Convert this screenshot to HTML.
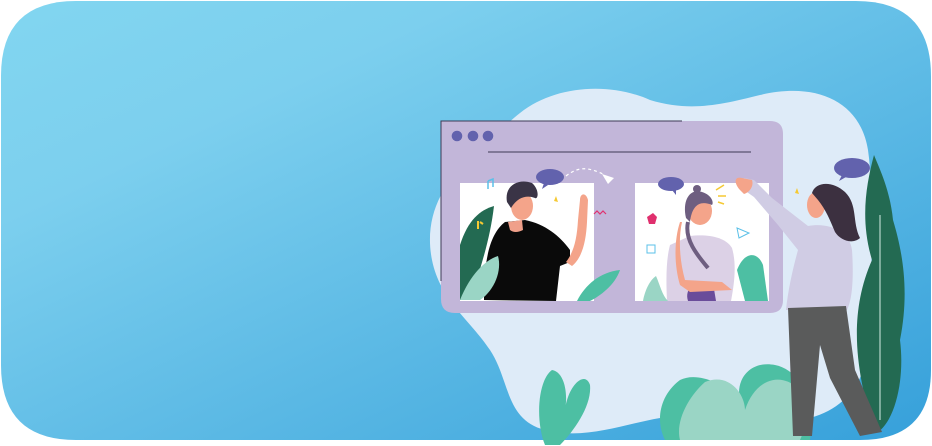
<!DOCTYPE html>
<html><head><meta charset="utf-8"><style>
html,body{margin:0;padding:0;background:#fff;width:932px;height:446px;overflow:hidden}
svg{display:block}
</style></head><body>
<svg width="932" height="446" viewBox="0 0 932 446" xmlns="http://www.w3.org/2000/svg">
<defs>
<linearGradient id="bg" x1="0" y1="0" x2="1" y2="1" gradientUnits="objectBoundingBox">
<stop offset="0" stop-color="#82d6f0"/><stop offset="0.25" stop-color="#7ccfee"/><stop offset="1" stop-color="#36a0da"/>
</linearGradient>
</defs>
<path d="M76 1 H856 Q931 1 931 76 V370 Q931 440 860 440 H76 Q1 440 1 365 V76 Q1 1 76 1Z" fill="url(#bg)"/>
<path d="M520 113 C555 85 610 82 650 100 C690 112 720 105 760 95 C815 82 860 100 868 150 C875 200 870 260 872 300 C875 360 860 410 800 420 C740 428 700 412 660 418 C620 425 585 440 545 430 C505 420 510 380 490 350 C470 320 440 300 432 260 C424 220 440 185 470 160 C490 140 505 125 520 113Z" fill="#deebf8"/>
<path d="M441 121 H770 Q783 121 783 134 V300 Q783 313 770 313 H455 Q441 313 441 299Z" fill="#c2b6d9"/>
<path d="M441 281 V121 H682" fill="none" stroke="#3d3a55" stroke-width="1"/>
<circle cx="457" cy="136" r="5.3" fill="#6262ad"/><circle cx="473" cy="136" r="5.3" fill="#6262ad"/><circle cx="488" cy="136" r="5.3" fill="#6262ad"/>
<line x1="488" y1="152" x2="751" y2="152" stroke="#3d3a55" stroke-width="1"/>
<rect x="460" y="183" width="134" height="118" fill="#fff"/>
<rect x="635" y="183" width="134" height="118" fill="#fff"/>
<!-- left panel -->
<path d="M460 300 V245 C468 220 480 210 494 206 C490 240 480 270 470 300Z" fill="#236a52"/>
<path d="M478 221 V229 M480 222 l3 2" stroke="#f5c933" stroke-width="2"/>
<path d="M484 300 C484 265 488 235 505 222 L525 220 C545 224 560 236 570 250 L570 262 L560 266 L556 301Z" fill="#0a0a0a"/>
<path d="M508 222 L522 220 L523 230 Q515 234 510 230Z" fill="#f0a08a"/>
<ellipse cx="522" cy="206" rx="11" ry="14" fill="#f4a48a"/>
<path d="M507 202 C504 186 518 178 532 183 C540 190 538 200 535 198 C528 195 518 196 511 208Z" fill="#3a3446"/>
<path d="M566 262 C574 252 577 238 578 220 L580 200 C580 193 586 192 588 200 L587 222 C586 242 582 258 572 266Z" fill="#f4a48a"/>
<path d="M460 300 C470 275 485 260 498 256 C502 270 495 290 480 300Z" fill="#9ad5c5"/>
<path d="M577 301 C585 285 600 272 620 270 C615 285 600 296 590 301Z" fill="#4dbfa3"/>
<path d="M488 181 v8 m0-8 l5 -2 v8" stroke="#5bc0e8" stroke-width="1.5" fill="none"/>
<path d="M594 214 l3 -3 3 3 3 -3 3 3" stroke="#e0306e" stroke-width="1.2" fill="none"/>
<path d="M556 196 l2 6 -4 -1Z" fill="#f5c933"/>
<ellipse cx="550" cy="177" rx="14" ry="8" fill="#6262ad"/><path d="M544 183 l-2 6 6 -4Z" fill="#6262ad"/>
<path d="M566 176 C580 165 590 168 605 175" stroke="#fff" stroke-width="1.2" fill="none" stroke-dasharray="3 3"/>
<path d="M602 174 l12 4 -6 6Z" fill="#fff"/>
<!-- right panel -->
<ellipse cx="671" cy="184" rx="13" ry="7" fill="#6262ad"/><path d="M672 190 l4 5 0 -6Z" fill="#6262ad"/>
<path d="M667 301 C666 280 666 260 670 245 L690 236 C705 234 725 236 732 248 C737 265 734 285 731 301Z" fill="#dcd1e6"/>
<path d="M688 301 C686 295 688 290 690 288 L714 289 L716 301Z" fill="#6a4c9a"/>
<ellipse cx="700" cy="211" rx="12" ry="14" fill="#f4a48a"/>
<path d="M686 218 C682 200 690 188 702 192 C712 195 714 203 712 205 C700 200 692 205 690 222Z" fill="#6e5e80"/>
<circle cx="697" cy="189" r="4" fill="#6e5e80"/>
<path d="M688 222 C684 240 698 256 708 268" stroke="#6e5e80" stroke-width="4" fill="none"/>
<path d="M682 222 C678 240 680 262 685 280 L722 282 L732 290 L690 292 L680 285 C674 265 674 240 680 222Z" fill="#f4a48a"/>
<path d="M647 217 l6 -4 4 4 -2 7 -6 0Z" fill="#e0306e"/>
<path d="M716 190 l8 -5 M718 196 h8 M718 202 l6 2" stroke="#f5c933" stroke-width="1.5"/>
<path d="M737 228 l12 5 -10 5Z" fill="none" stroke="#5bc0e8" stroke-width="1"/>
<rect x="647" y="245" width="8" height="8" fill="none" stroke="#5bc0e8" stroke-width="1"/>
<path d="M643 301 C645 290 650 280 656 276 C660 285 662 295 668 301Z" fill="#9ad5c5"/>
<path d="M737 270 C745 250 758 252 763 265 L768 301 L745 301Z" fill="#4dbfa3"/>
<!-- bottom plants -->
<path d="M545 445 C535 420 538 380 552 370 C565 372 568 395 565 410 C568 385 585 370 590 385 C592 405 575 430 560 445Z" fill="#4dbfa3"/>
<path d="M665 440 C655 420 660 395 680 380 C700 370 730 388 740 400 C735 380 750 360 775 365 C800 370 815 400 810 440Z" fill="#4dbfa3"/>
<path d="M680 440 C675 420 690 395 705 382 C730 372 745 395 745 410 C755 380 780 370 800 390 C810 405 805 430 800 440Z" fill="#9ad5c5"/>
<!-- tall plant -->
<path d="M874 155 C866 185 860 220 872 260 C850 310 855 360 868 410 L878 432 C895 420 905 380 900 340 C910 290 902 250 893 220 C890 190 880 170 874 155Z" fill="#236a52"/>
<path d="M880 215 V420" stroke="#d6ece4" stroke-width="1"/>
<!-- woman -->
<path d="M786 310 C788 290 793 268 798 250 L778 225 L754 197 L744 190 C740 186 740 180 744 178 L754 180 L772 198 L808 226 C830 222 850 232 852 250 C854 280 852 300 847 310Z" fill="#d0cce4"/>
<path d="M740 190 C733 182 735 176 742 178 L752 180 C754 186 750 192 744 194Z" fill="#f4a48a"/>
<path d="M788 308 L846 306 L855 370 L882 432 L860 436 L830 378 L820 345 L812 436 L793 436 Z" fill="#5a5b5b"/>
<ellipse cx="816" cy="205" rx="9" ry="13" fill="#f4a48a"/>
<path d="M812 193 C815 182 832 180 845 192 C858 205 852 222 860 238 C852 245 840 240 835 232 C830 220 826 210 818 200Z" fill="#3c3040"/>
<ellipse cx="852" cy="168" rx="18" ry="10" fill="#6262ad"/><path d="M842 175 l-3 6 7 -4Z" fill="#6262ad"/>
<path d="M797 188 l2 6 -4 -1Z" fill="#f5c933"/>
</svg>
</body></html>
